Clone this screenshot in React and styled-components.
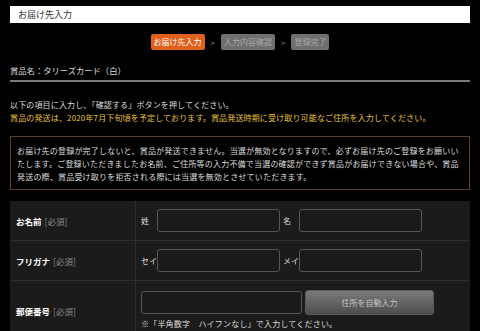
import React from 'react';
import styled, { createGlobalStyle } from 'styled-components';

const GlobalStyle = createGlobalStyle`
  html, body {
    margin: 0;
    padding: 0;
    background: #000;
  }
  body {
    font-family: "Noto Sans CJK JP", "Noto Sans", sans-serif;
    color: #ddd;
  }
`;

const Page = styled.div`
  padding: 6px 10px 0;
`;

const TitleBar = styled.div`
  height: 17px;
  background: #fff;
  color: #333;
  font-size: 9px;
  line-height: 17px;
  padding-left: 8px;
`;

const Steps = styled.div`
  display: flex;
  justify-content: center;
  align-items: center;
  margin-top: 11px;
  height: 16px;
`;

const Step = styled.span`
  display: inline-block;
  height: 16px;
  line-height: 16px;
  padding: 0 3px;
  border-radius: 2px;
  font-size: 8px;
  background: ${p => (p.$active ? '#e0601b' : '#6f6f6f')};
  color: ${p => (p.$active ? '#fff' : '#a9a9a9')};
`;

const Arrow = styled.span`
  color: #8a8a8a;
  font-size: 8px;
  margin: 0 6px;
`;

const Prize = styled.div`
  margin-top: 14px;
  font-size: 8.3px;
  line-height: 12px;
  padding-bottom: 4px;
  color: #ddd;
  border-bottom: 2px solid #7a7a7a;
`;

const Lead = styled.div`
  margin-top: 16px;
  font-size: 8px;
  line-height: 13px;
  letter-spacing: 0.15px;
`;

const Yellow = styled.div`
  color: #e8c23a;
`;

const Notice = styled.div`
  margin-top: 12px;
  border: 1px solid #5e3d2c;
  padding: 7px 6px 6px;
  font-size: 8px;
  line-height: 13px;
  letter-spacing: 0.2px;
  color: #ddd;
`;

const Table = styled.div`
  margin-top: 11px;
  background: #1b1b1b;
  display: grid;
  grid-template-columns: 126px 1fr;
`;

const Label = styled.div`
  display: flex;
  align-items: center;
  padding-left: 6px;
  height: ${p => p.$h}px;
  border-right: 1px solid #2e2e2e;
  border-bottom: 1px solid #2e2e2e;
  font-size: 8.5px;
  color: #fff;
  font-weight: bold;
`;

const Req = styled.span`
  color: #8d8d8d;
  font-weight: normal;
  margin-left: 3px;
`;

const Cell = styled.div`
  display: flex;
  align-items: center;
  padding-left: 5px;
  height: ${p => p.$h}px;
  border-bottom: 1px solid #2e2e2e;
  font-size: 8px;
  color: #ddd;
`;

const ZipCell = styled.div`
  padding: 9px 0 0 5px;
  height: ${p => p.$h}px;
  box-sizing: border-box;
  font-size: 8px;
  color: #ddd;
`;

const Prefix = styled.span`
  width: 16px;
  flex: none;
  margin-left: ${p => (p.$second ? 3 : 0)}px;
`;

const Input = styled.div`
  width: ${p => p.$w}px;
  height: 23px;
  box-sizing: border-box;
  border: 1px solid #555;
  border-radius: 3px;
  background: #1a1a1a;
  flex: none;
`;

const Row = styled.div`
  display: flex;
  align-items: center;
  gap: 3px;
`;

const AutoButton = styled.div`
  width: 129px;
  height: 25px;
  box-sizing: border-box;
  border: 1px solid #5a5a5a;
  border-radius: 3px;
  background: linear-gradient(#7a7a7a, #4d4d4d);
  color: #c4c4c4;
  font-size: 8px;
  display: flex;
  align-items: center;
  justify-content: center;
`;

const Note = styled.div`
  margin-top: 3px;
  font-size: 8px;
  line-height: 11px;
  letter-spacing: 0.2px;
`;

export default function App() {
  return (
    <Page>
      <GlobalStyle />
      <TitleBar>お届け先入力</TitleBar>
      <Steps>
        <Step $active>お届け先入力</Step>
        <Arrow>&gt;</Arrow>
        <Step>入力内容確認</Step>
        <Arrow>&gt;</Arrow>
        <Step>登録完了</Step>
      </Steps>
      <Prize>賞品名：タリーズカード（白）</Prize>
      <Lead>
        <div>以下の項目に入力し、「確認する」ボタンを押してください。</div>
        <Yellow>賞品の発送は、2020年7月下旬頃を予定しております。賞品発送時期に受け取り可能なご住所を入力してください。</Yellow>
      </Lead>
      <Notice>
        お届け先の登録が完了しないと、賞品が発送できません。当選が無効となりますので、必ずお届け先のご登録をお願いいたします。ご登録いただきましたお名前、ご住所等の入力不備で当選の確認ができず賞品がお届けできない場合や、賞品発送の際、賞品受け取りを拒否される際には当選を無効とさせていただきます。
      </Notice>
      <Table>
        <Label $h={39}>お名前<Req>[必須]</Req></Label>
        <Cell $h={39}>
          <Prefix>姓</Prefix>
          <Input $w={123} />
          <Prefix $second>名</Prefix>
          <Input $w={123} />
        </Cell>
        <Label $h={39}>フリガナ<Req>[必須]</Req></Label>
        <Cell $h={39}>
          <Prefix>セイ</Prefix>
          <Input $w={123} />
          <Prefix $second>メイ</Prefix>
          <Input $w={123} />
        </Cell>
        <Label $h={60}>郵便番号<Req>[必須]</Req></Label>
        <ZipCell $h={60}>
          <Row>
            <Input $w={161} />
            <AutoButton>住所を自動入力</AutoButton>
          </Row>
          <Note>※「半角数字　ハイフンなし」で入力してください。</Note>
        </ZipCell>
      </Table>
    </Page>
  );
}
